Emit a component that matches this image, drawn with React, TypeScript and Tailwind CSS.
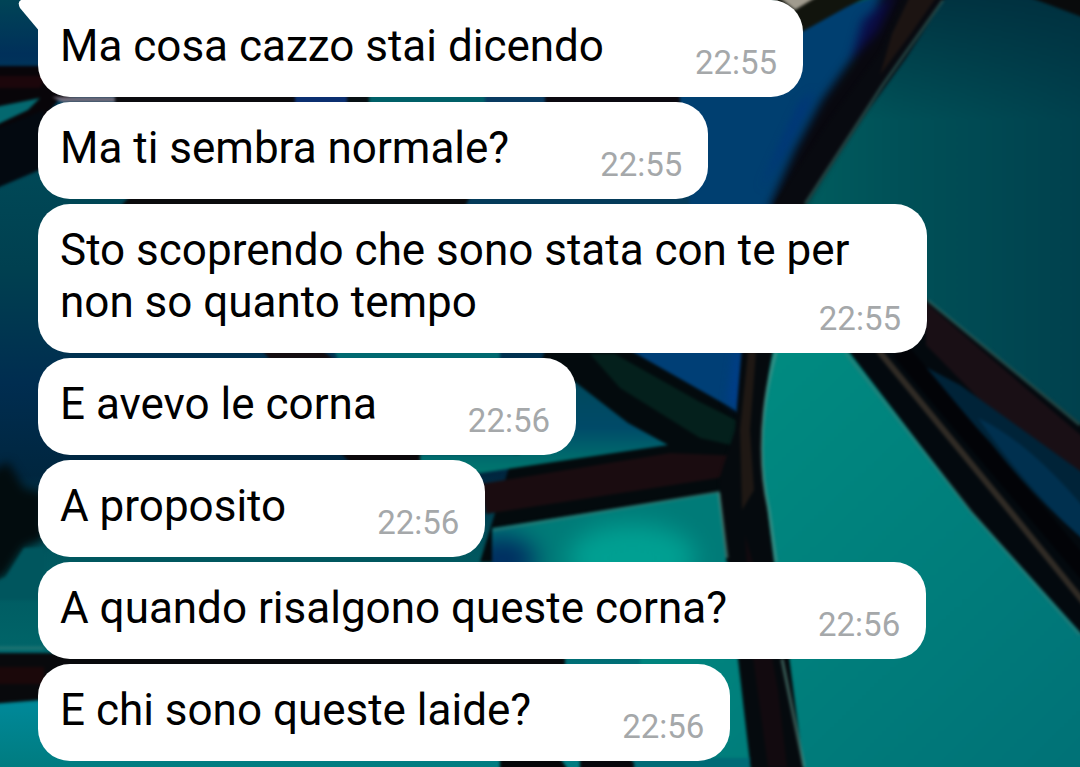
const messages = [
  { text: "Ma cosa cazzo stai dicendo", time: "22:55" },
  { text: "Ma ti sembra normale?", time: "22:55" },
  { text: "Sto scoprendo che sono stata con te per non so quanto tempo", time: "22:55" },
  { text: "E avevo le corna", time: "22:56" },
  { text: "A proposito", time: "22:56" },
  { text: "A quando risalgono queste corna?", time: "22:56" },
  { text: "E chi sono queste laide?", time: "22:56" },
];

function Wallpaper() {
  return (
    <svg
      aria-hidden="true"
      className="absolute inset-0 h-full w-full"
      viewBox="0 0 1080 767"
      preserveAspectRatio="xMidYMid slice"
    >
      <defs>
        <filter id="soft" x="-5%" y="-5%" width="110%" height="110%" colorInterpolationFilters="sRGB">
          <feGaussianBlur stdDeviation="1.8" />
        </filter>
        <filter id="glow" x="-100%" y="-100%" width="300%" height="300%" colorInterpolationFilters="sRGB">
          <feGaussianBlur stdDeviation="12" />
        </filter>
        <filter id="haze" x="-50%" y="-50%" width="200%" height="200%" colorInterpolationFilters="sRGB">
          <feGaussianBlur stdDeviation="5" />
        </filter>
        <clipPath id="lowerPane">
          <path d="M492 528L719 492L727 568H492Z" />
        </clipPath>
        <linearGradient id="upper" x1="0" y1="0" x2="1" y2="0">
          <stop offset="0" stopColor="#006462" />
          <stop offset="0.45" stopColor="#005057" />
          <stop offset="1" stopColor="#003f4c" />
        </linearGradient>
        <linearGradient id="lower" x1="0" y1="0" x2="1" y2="1">
          <stop offset="0" stopColor="#008f82" />
          <stop offset="0.5" stopColor="#00807c" />
          <stop offset="1" stopColor="#007076" />
        </linearGradient>
        <linearGradient id="left" x1="0" y1="0" x2="0" y2="1">
          <stop offset="0" stopColor="#004456" />
          <stop offset="0.07" stopColor="#00305a" />
          <stop offset="0.2" stopColor="#004a58" />
          <stop offset="0.35" stopColor="#004050" />
          <stop offset="0.5" stopColor="#002d50" />
          <stop offset="0.62" stopColor="#00263f" />
          <stop offset="0.72" stopColor="#00565e" />
          <stop offset="0.84" stopColor="#006468" />
          <stop offset="0.92" stopColor="#008898" />
          <stop offset="1" stopColor="#007c80" />
        </linearGradient>
        <linearGradient id="shade" x1="0" y1="0" x2="0" y2="1">
          <stop offset="0" stopColor="#002838" stopOpacity="0.75" />
          <stop offset="1" stopColor="#002838" stopOpacity="0" />
        </linearGradient>
        <linearGradient id="pane" x1="0" y1="0" x2="0" y2="1">
          <stop offset="0" stopColor="#00485c" />
          <stop offset="0.5" stopColor="#004a68" />
          <stop offset="0.8" stopColor="#00686c" />
          <stop offset="1" stopColor="#00786f" />
        </linearGradient>
      </defs>
      <rect width="1080" height="767" fill="url(#left)" />
      <g filter="url(#soft)">
        <path d="M740-10H1100V450L920 300H740Z" fill="url(#upper)" />
        <path d="M880-10H1100V120H840Z" fill="url(#shade)" />
        <path d="M720 340H850L1100 650V780H640V650H730Z" fill="url(#lower)" />

        <path d="M-10 66H60L110 90L60 98L-10 190Z" fill="#080509" />
        <path d="M-10 76H45L40 88H-10Z" fill="#1c060b" />
        <path d="M-10 108L40 98L28 110L-10 128Z" fill="#04686f" />
        <path d="M-10 132L44 110V168L-10 191Z" fill="#030910" />

        <path d="M-10 653H565V668L40 700L-10 704Z" fill="#08090c" />
        <path d="M-10 667H44V684H-10Z" fill="#1b080a" />

        <path d="M52 97H115V102H62Z" fill="#746d7c" />
        <path d="M115 94H295V105H115Z" fill="#0b0b0e" />
        <path d="M295 94H347V105H295Z" fill="#0b2f70" />
        <path d="M347 94H369V105H347Z" fill="#071014" />
        <path d="M369 94H485V105H369Z" fill="#006068" />
        <path d="M485 94H545V105H485Z" fill="#093b61" />
        <path d="M545 94H682V105H545Z" fill="#0b0910" />
        <path d="M130 196H478L465 207H120Z" fill="#0a0b0d" />
        <path d="M470 196H770V207H465Z" fill="#043b5a" />
        <path d="M262 350H322L334 360H270Z" fill="#130d10" />
        <path d="M334 350H500V360H338Z" fill="#006970" />
        <path d="M340 452H420L434 463H350Z" fill="#0b080b" />

        <path d="M678 80L800 20L900-10L850 70L775 208H690Z" fill="#003f70" />
        <path d="M765-10H880L845 8L800 33Z" fill="#11140d" />
        <path d="M770-10H828L795 10Z" fill="#a09b8e" />
        <path d="M1010-10H1090V20Z" fill="#090b0c" />

        <path d="M548 340H760V562H480Z" fill="#030a0d" />
        <path d="M626 348H748L744 416L728 406Z" fill="#003f76" />
        <path d="M575 382L628 423L668 445L480 473L420 465V454H520V382Z" fill="url(#pane)" />
        <path d="M590 354H615L700 402L744 424V448L700 438L620 388Z" fill="#04201c" />
        <path d="M480 484L670 453L744 456V474L486 514Z" fill="#1a0c10" />
      </g>

      <g filter="url(#haze)">
        <path d="M884-10H936L900 50L845 130L800 210H768L795 150L822 100L858 50Z" fill="#08080f" />
        <path d="M862 20L898-10L878 32L850 62Z" fill="#0b0b4c" opacity="0.8" />
        <path d="M800 105L815 90L785 150L760 190Z" fill="#002a84" opacity="0.6" />
        <path d="M735 352H741V412L728 402Z" fill="#003ca0" opacity="0.5" />
        <path d="M-10 472L8 462L24 488L44 492V540L24 548L6 576L-10 584Z" fill="#020c0e" />
      </g>

      <g filter="url(#soft)">
        <path d="M905-8H949L906 58L870 108L804 208H772L830 120L880 52Z" fill="#080a10" />
        <path d="M912-8H940L912 32L880 75L892 34Z" fill="#1c1412" />
        <path d="M24 548H44V600H-10V585L6 577Z" fill="#00565e" />

        <path d="M492 528L719 492L727 568H492Z" fill="#007b78" />
        <g clipPath="url(#lowerPane)">
          <g filter="url(#glow)">
            <ellipse cx="632" cy="558" rx="64" ry="34" fill="#00a092" />
            <ellipse cx="502" cy="560" rx="34" ry="24" fill="#002c60" />
          </g>
        </g>

        <path d="M742 346H774Q754 438 767 506L774 562L785 625L805 780H752L738 659L728 562L719 480L735 430Z" fill="#050a0e" />
        <path d="M748 352H756L750 430L754 490L742 510L740 430Z" fill="#1f1814" />
        <path d="M745 535L758 580L778 690L787 767H768L752 650Z" fill="#120a0f" />

        <path d="M840 340L920 294L1090 431V643L970 510Z" fill="#03090e" />
        <path d="M925 302L1090 443V485L990 410L926 345Z" fill="#190f15" />
        <path d="M912 360L960 385L1090 478V545Q1035 500 990 442Z" fill="#002338" />
        <path d="M978 418Q1030 442 1090 515V545Q1035 500 978 418Z" fill="#00304f" />
        <path d="M900 350L950 410L1090 576" fill="none" stroke="#020307" strokeWidth="18" />
        <path d="M878 350L1014 516L1090 610" fill="none" stroke="#302b25" strokeWidth="6" />

        <path d="M500 758H560L568 770H500Z" fill="#050608" />
        <path d="M580 758H630L640 770H580Z" fill="#07070c" />
        <path d="M634 758H750V770H634Z" fill="#006b76" />
        <path
          d="M776 352Q752 438 769 510L776 562M782 659L804 767M719 493L727 558"
          fill="none"
          stroke="#5b9488"
          strokeWidth="3"
          opacity="0.6"
        />
        <path
          d="M845 352L972 513L1080 635M943 0L882 86L805 204M927 300L1080 425M493 530L720 492M-2 648H44"
          fill="none"
          stroke="#3f8078"
          strokeWidth="3"
          opacity="0.5"
        />
      </g>
    </svg>
  );
}

export default function App() {
  return (
    <main className="relative min-h-screen overflow-hidden bg-[#004650] font-[Roboto,sans-serif]">
      <Wallpaper />
      <ol className="relative flex flex-col items-start gap-[5px] pr-4 pb-[6px] pl-[38px]">
        {messages.map((message, index) => (
          <li
            key={message.text}
            className={`relative max-w-[889px] bg-white pt-5 pr-[26px] pb-[14px] pl-[22px] ${
              index === 0 ? "rounded-[32px] rounded-tl-none" : "rounded-[32px]"
            }`}
          >
            {index === 0 && (
              <svg
                aria-hidden="true"
                className="absolute top-0 right-full h-[30px] w-5"
                viewBox="0 0 20 30"
              >
                <path d="M20 0H3Q-1 2 2 8L20 29.500Z" fill="white" />
              </svg>
            )}
            <p className="text-[44px] leading-[52px] text-black">
              {message.text}
              <time className="float-right mt-[23px] ml-[91px] text-[33px] leading-[40px] text-[#a5a8aa]">
                {message.time}
              </time>
            </p>
          </li>
        ))}
      </ol>
    </main>
  );
}
